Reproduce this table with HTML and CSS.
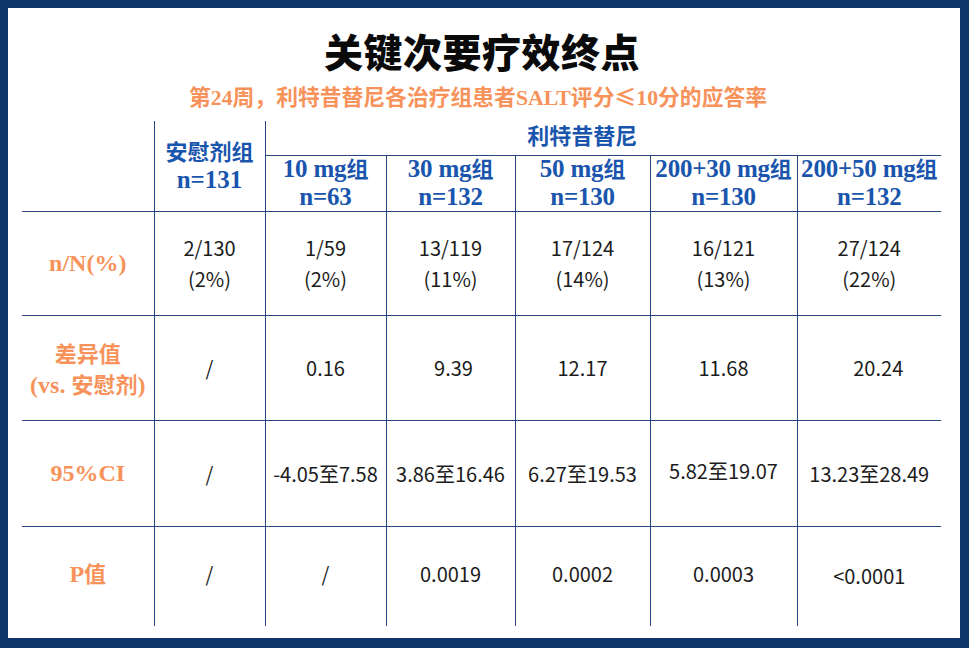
FILE: index.html
```html
<!DOCTYPE html>
<html lang="zh-CN">
<head>
<meta charset="utf-8">
<title>关键次要疗效终点</title>
<link rel="stylesheet" href="styles.css">
</head>
<body>
<div class="frame">
  <div class="sheet">
    <h1 class="title">关键次要疗效终点</h1>
    <p class="subtitle">第24周，利特昔替尼各治疗组患者SALT评分<span class="zh">≤</span>10分的应答率</p>
    <table class="results">
      <colgroup>
        <col class="c-label">
        <col class="c-placebo">
        <col class="c-10">
        <col class="c-30">
        <col class="c-50">
        <col class="c-230">
        <col class="c-250">
      </colgroup>
      <thead>
        <tr class="hr-top">
          <th class="corner" rowspan="2"></th>
          <th class="hd placebo" rowspan="2"><span class="ln"><span class="zh">安慰剂组</span></span><span class="ln">n=131</span></th>
          <th class="hd group" colspan="5"><span class="zh">利特昔替尼</span></th>
        </tr>
        <tr class="hr-sub">
          <th class="hd sub"><span class="ln">10 mg<span class="zh">组</span></span><span class="ln">n=63</span></th>
          <th class="hd sub"><span class="ln">30 mg<span class="zh">组</span></span><span class="ln">n=132</span></th>
          <th class="hd sub"><span class="ln">50 mg<span class="zh">组</span></span><span class="ln">n=130</span></th>
          <th class="hd sub"><span class="ln">200+30 mg<span class="zh">组</span></span><span class="ln">n=130</span></th>
          <th class="hd sub"><span class="ln">200+50 mg<span class="zh">组</span></span><span class="ln">n=132</span></th>
        </tr>
      </thead>
      <tbody>
        <tr class="row r1">
          <th class="label">n/N(%)</th>
          <td>2/130<br>(2%)</td>
          <td>1/59<br>(2%)</td>
          <td>13/119<br>(11%)</td>
          <td>17/124<br>(14%)</td>
          <td>16/121<br>(13%)</td>
          <td>27/124<br>(22%)</td>
        </tr>
        <tr class="row r2">
          <th class="label"><span class="ln"><span class="zh">差异值</span></span><span class="ln">(vs. <span class="zh">安慰剂</span>)</span></th>
          <td>/</td>
          <td>0.16</td>
          <td class="nudge-s">9.39</td>
          <td>12.17</td>
          <td>11.68</td>
          <td class="nudge">20.24</td>
        </tr>
        <tr class="row r3">
          <th class="label">95%CI</th>
          <td>/</td>
          <td>-4.05至7.58</td>
          <td>3.86至16.46</td>
          <td>6.27至19.53</td>
          <td class="up">5.82至19.07</td>
          <td>13.23至28.49</td>
        </tr>
        <tr class="row r4">
          <th class="label">P<span class="zh">值</span></th>
          <td>/</td>
          <td>/</td>
          <td>0.0019</td>
          <td>0.0002</td>
          <td>0.0003</td>
          <td class="down">&lt;0.0001</td>
        </tr>
      </tbody>
    </table>
  </div>
</div>
</body>
</html>
```

FILE: styles.css
```css
html, body {
  margin: 0;
  padding: 0;
  background: #10376b;
}

.frame {
  width: 969px;
  height: 648px;
  box-sizing: border-box;
  padding: 8px 9px 10px 8px;
  background: #10376b;
}

.sheet {
  height: 100%;
  background: #ffffff;
  overflow: hidden;
  display: flex;
  flex-direction: column;
  align-items: flex-start;
}

.title {
  align-self: stretch;
  margin: 18px 0 0 0;
  text-align: center;
  font-family: "Noto Sans CJK SC", sans-serif;
  font-weight: 900;
  font-size: 39px;
  line-height: 48px;
  color: #0a0a0a;
  letter-spacing: 0.5px;
  padding-right: 4px;
}

.subtitle {
  align-self: stretch;
  margin: 8px 0 0 0;
  padding-right: 12px;
  text-align: center;
  font-family: "Liberation Serif", "Noto Sans CJK SC", serif;
  font-weight: 700;
  font-size: 21.8px;
  line-height: 28px;
  color: #f7935a;
}

.results {
  margin: 9px 0 0 14px;
  width: 919px;
  border-collapse: collapse;
  table-layout: fixed;
}

.c-label { width: 132px; }
.c-placebo { width: 111px; }
.c-10 { width: 121px; }
.c-30 { width: 129px; }
.c-50 { width: 135px; }
.c-230 { width: 147px; }
.c-250 { width: 144px; }

.results th,
.results td {
  padding: 0;
  text-align: center;
  vertical-align: middle;
}

.zh {
  font-family: "Noto Sans CJK SC", sans-serif;
}

.ln {
  display: block;
  white-space: nowrap;
}

.hd {
  font-family: "Liberation Serif", "Noto Sans CJK SC", serif;
  font-weight: 700;
  font-size: 25px;
  color: #1a55ad;
  white-space: nowrap;
}

.hd .zh {
  font-size: 22px;
}

.results .hr-top { height: 34px; }
.results .hr-sub { height: 55px; }

.results .placebo {
  border-left: 1px solid #27467f;
  border-right: 1px solid #27467f;
  border-bottom: 1px solid #27467f;
}

.results .placebo .ln {
  height: 30px;
  line-height: 30px;
}

.results .placebo .ln:first-child {
  margin-top: -2px;
}

.results .group {
  border-bottom: 1px solid #27467f;
  line-height: 26px;
  padding-right: 42px;
  vertical-align: top;
}

.results .sub {
  border-left: 1px solid #27467f;
  border-bottom: 1px solid #27467f;
  letter-spacing: -0.2px;
  vertical-align: top;
}

.results .sub .ln {
  height: 29px;
  line-height: 29px;
}

.results .sub .ln:first-child {
  margin-top: -3px;
  height: 29px;
}

.results .corner {
  border-bottom: 1px solid #27467f;
}

.results .row td {
  font-family: "Noto Sans CJK SC", sans-serif;
  font-weight: 400;
  font-size: 20px;
  line-height: 31px;
  color: #1c1c1c;
  border-left: 1px solid #27467f;
  white-space: nowrap;
}

.results .row + .row th,
.results .row + .row td {
  border-top: 1px solid #27467f;
}

.results .label {
  font-family: "Liberation Serif", "Noto Sans CJK SC", serif;
  font-weight: 700;
  font-size: 24px;
  line-height: 31px;
  color: #f7935a;
}

.label .zh {
  font-size: 22px;
}

.results .label .ln {
  height: 31px;
  line-height: 31px;
}

.results .r1 { height: 104px; }
.results .r2 { height: 105px; }
.results .r3 { height: 106px; }
.results .r4 { height: 100px; }

.results .r4 th,
.results .r4 td {
  padding-bottom: 6px;
}

.results .row .nudge {
  padding-left: 18px;
}

.results .row .nudge-s {
  padding-left: 6px;
}

.results .row .up {
  padding-bottom: 6px;
}

.results .row .down {
  padding-top: 4px;
}
```
